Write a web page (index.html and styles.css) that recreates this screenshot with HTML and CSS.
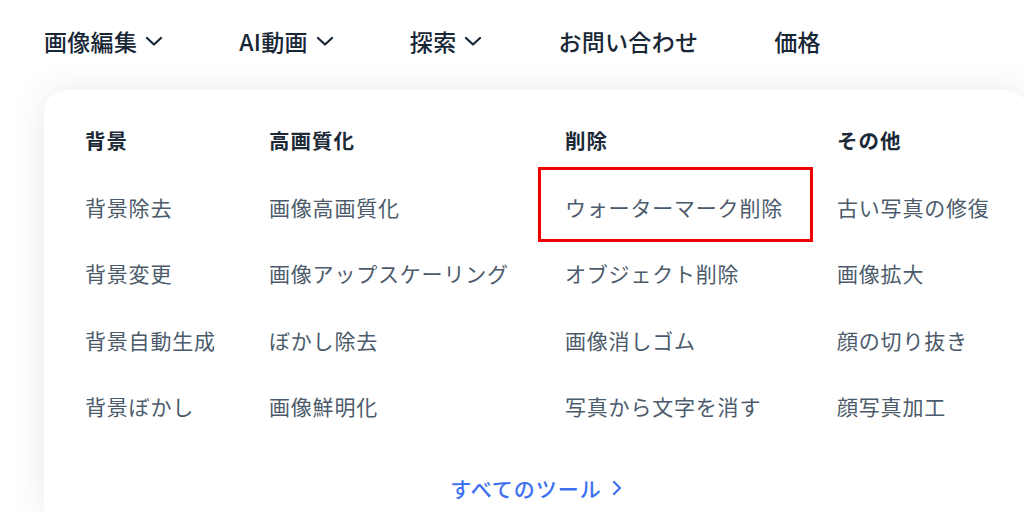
FILE: index.html
```html
<!DOCTYPE html>
<html>
<head>
    <title>画像編集ツール</title>
    <link rel="stylesheet" href="styles.css">
</head>
<body>

<nav class="topnav">
    <a class="nav-item">画像編集 <svg class="chev" viewBox="0 0 18 10"><path d="M2 2l7 6.5 7-6.5"/></svg></a>
    <a class="nav-item">AI動画 <svg class="chev" viewBox="0 0 18 10"><path d="M2 2l7 6.5 7-6.5"/></svg></a>
    <a class="nav-item">探索 <svg class="chev" viewBox="0 0 18 10"><path d="M2 2l7 6.5 7-6.5"/></svg></a>
    <a class="nav-item">お問い合わせ</a>
    <a class="nav-item">価格</a>
</nav>

<div class="dropdown">
    <div class="menu-grid">
        <div class="menu-col">
            <h3>背景</h3>
            <a>背景除去</a>
            <a>背景変更</a>
            <a>背景自動生成</a>
            <a>背景ぼかし</a>
        </div>
        <div class="menu-col">
            <h3>高画質化</h3>
            <a>画像高画質化</a>
            <a>画像アップスケーリング</a>
            <a>ぼかし除去</a>
            <a>画像鮮明化</a>
        </div>
        <div class="menu-col">
            <h3>削除</h3>
            <a class="marked">ウォーターマーク削除</a>
            <a>オブジェクト削除</a>
            <a>画像消しゴム</a>
            <a>写真から文字を消す</a>
        </div>
        <div class="menu-col">
            <h3>その他</h3>
            <a>古い写真の修復</a>
            <a>画像拡大</a>
            <a>顔の切り抜き</a>
            <a>顔写真加工</a>
        </div>
    </div>
    <div class="all-tools">
        <a>すべてのツール <svg class="arrow" viewBox="0 0 10 16"><path d="M2 2l6 6-6 6"/></svg></a>
    </div>
</div>

</body>
</html>
```

FILE: styles.css
```css
body {
    margin: 0;
    padding: 0;
    background: #fff;
    font-family: "Noto Sans CJK JP", "Noto Sans", sans-serif;
    overflow: hidden;
    height: 512px;
}
a {
    text-decoration: none;
    cursor: pointer;
}
.topnav {
    display: flex;
    align-items: center;
    gap: 76px;
    height: 82px;
    padding-left: 44px;
}
.nav-item {
    display: flex;
    align-items: center;
    gap: 8px;
    font-size: 23px;
    font-weight: 500;
    letter-spacing: 0.3px;
    color: #172736;
}
.chev {
    width: 18px;
    height: 10px;
    fill: none;
    stroke: #172736;
    stroke-width: 2.2;
    stroke-linecap: round;
    stroke-linejoin: round;
}
.dropdown {
    margin: 8px 0 0 44px;
    width: 984px;
    height: 422px;
    background: #fff;
    border-radius: 22px 22px 0 0;
    box-shadow: 0 0 36px rgba(0,0,0,0.09);
    padding-top: 35px;
    box-sizing: border-box;
}
.menu-grid {
    display: grid;
    grid-template-columns: 184px 296px 272px 1fr;
    padding-left: 41px;
}
.menu-col {
    display: flex;
    flex-direction: column;
    align-items: flex-start;
    gap: 36.5px;
}
.menu-col h3 {
    margin: 0;
    font-size: 20.5px;
    line-height: 30px;
    font-weight: 700;
    letter-spacing: 1px;
    color: #1c2a38;
}
.menu-col a {
    font-size: 21px;
    line-height: 30px;
    letter-spacing: 0.8px;
    color: #4c5b6b;
}
.marked {
    position: relative;
}
.marked::after {
    content: "";
    position: absolute;
    left: -27px;
    right: -30px;
    top: -25px;
    bottom: -20px;
    border: 3px solid #f00000;
}
.all-tools {
    margin-top: 52px;
    text-align: center;
}
.all-tools a {
    display: inline-flex;
    align-items: center;
    gap: 10px;
    font-size: 21px;
    line-height: 30px;
    letter-spacing: 1px;
    color: #3d71f2;
    font-weight: 500;
}
.arrow {
    width: 10px;
    height: 16px;
    fill: none;
    stroke: #3d71f2;
    stroke-width: 2.2;
    stroke-linecap: round;
    stroke-linejoin: round;
}
```
